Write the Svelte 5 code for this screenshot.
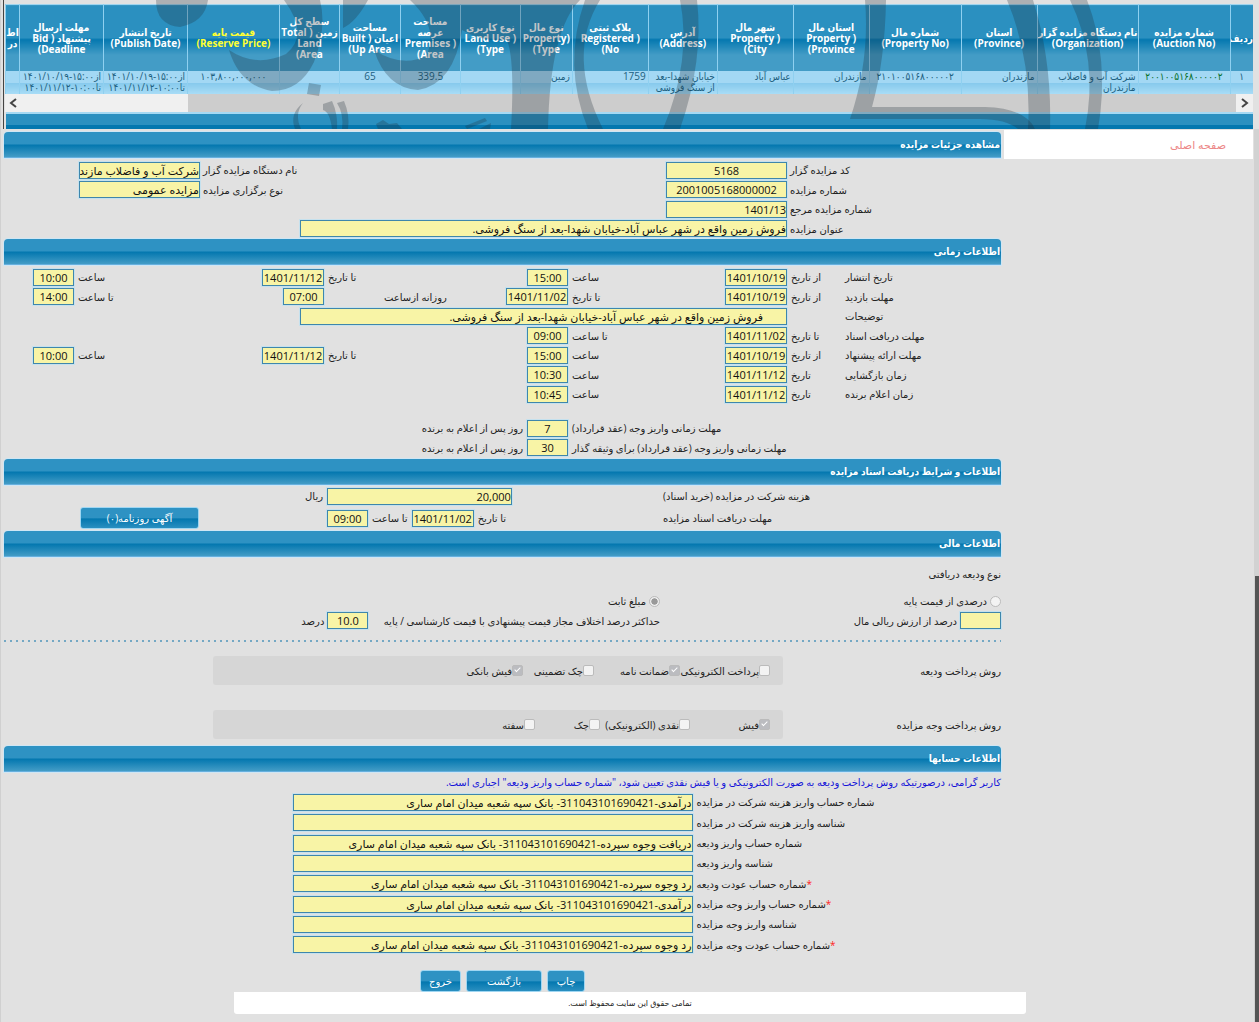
<script>
	const columns = [
		{ width: 23, head: ['ردیف'], cell: ['۱'], align: 'center' },
		{ width: 92, head: ['شماره مزایده', '(Auction No)'], cell: ['۲۰۰۱۰۰۵۱۶۸۰۰۰۰۰۲'], align: 'center', tone: 'green' },
		{ width: 101, head: ['نام دستگاه مزایده گزار', '(Organization)'], cell: ['شرکت آب و فاضلاب', 'مازندران'] },
		{ width: 76, head: ['استان', '(Province)'], cell: ['مازندران'] },
		{ width: 92, head: ['شماره مال', '(Property No)'], cell: ['۲۱۰۱۰۰۵۱۶۸۰۰۰۰۰۲'], align: 'center' },
		{ width: 76, head: ['استان مال', '( Property', 'Province)'], cell: ['مازندران'] },
		{ width: 76, head: ['شهر مال', '( Property', 'City)'], cell: ['عباس آباد'] },
		{ width: 69, head: ['آدرس', '(Address)'], cell: ['خیابان شهدا-بعد', 'از سنگ فروشی'] },
		{ width: 76, head: ['پلاک ثبتی', '( Registered', 'No)'], cell: ['1759'] },
		{ width: 52, head: ['نوع مال', '(Property', 'Type)'], cell: ['زمین'] },
		{ width: 60, head: ['نوع کاربری', '( Land Use', 'Type)'], cell: [] },
		{ width: 60, head: ['مساحت', 'عرصه', '( Premises', 'Area)'], cell: ['339.5'], align: 'center' },
		{ width: 61, head: ['مساحت', 'اعیان ( Built', 'Up Area)'], cell: ['65'], align: 'center' },
		{ width: 60, head: ['سطح کل', 'زمین ( Total', 'Land', 'Area)'], cell: [] },
		{ width: 92, head: ['قیمت پایه', '(Reserve Price)'], cell: ['۱۰۳,۸۰۰,۰۰۰,۰۰۰'], align: 'center', tone: 'yellow' },
		{ width: 84, head: ['تاریخ انتشار', '(Publish Date)'], cell: ['از۱۵:۰۰-۱۴۰۱/۱۰/۱۹', 'تا۱۰:۰۰-۱۴۰۱/۱۱/۱۲'] },
		{ width: 84, head: ['مهلت ارسال', 'پیشنهاد ( Bid', 'Deadline)'], cell: ['از۱۵:۰۰-۱۴۰۱/۱۰/۱۹', 'تا۱۰:۰۰-۱۴۰۱/۱۱/۱۲'] },
		{ width: 14, head: ['اط', 'در'], cell: [] }
	];
	const total = columns.reduce((sum, c) => sum + c.width, 0);

	const title = 'فروش زمین واقع در شهر عباس آباد-خیابان شهدا-بعد از سنگ فروشی.';

	// each part is [grid column of the label, label, value], the field takes the next column
	const times = [
		{ name: 'تاریخ انتشار', parts: [[2, 'از تاریخ', '1401/10/19'], [4, 'ساعت', '15:00'], [6, 'تا تاریخ', '1401/11/12'], [8, 'ساعت', '10:00']] },
		{ name: 'مهلت بازدید', parts: [[2, 'از تاریخ', '1401/10/19'], [4, 'تا تاریخ', '1401/11/02'], [6, 'روزانه ازساعت', '07:00'], [8, 'تا ساعت', '14:00']] },
		{ name: 'توضیحات', note: title, parts: [] },
		{ name: 'مهلت دریافت اسناد', parts: [[2, 'تا تاریخ', '1401/11/02'], [4, 'تا ساعت', '09:00']] },
		{ name: 'مهلت ارائه پیشنهاد', parts: [[2, 'از تاریخ', '1401/10/19'], [4, 'ساعت', '15:00'], [6, 'تا تاریخ', '1401/11/12'], [8, 'ساعت', '10:00']] },
		{ name: 'زمان بازگشایی', parts: [[2, 'تاریخ', '1401/11/12'], [4, 'ساعت', '10:30']] },
		{ name: 'زمان اعلام برنده', parts: [[2, 'تاریخ', '1401/11/12'], [4, 'ساعت', '10:45']] }
	];

	const deadlines = [
		{ name: 'مهلت زمانی واریز وجه (عقد قرارداد)', days: '7' },
		{ name: 'مهلت زمانی واریز وجه (عقد قرارداد) برای وثیقه گذار', days: '30' }
	];

	const methods = [
		{
			name: 'روش پرداخت ودیعه',
			kind: 'deposit',
			options: [['پرداخت الکترونیکی', false], ['ضمانت نامه', true], ['چک تضمینی', false], ['فیش بانکی', true]]
		},
		{
			name: 'روش پرداخت وجه مزایده',
			kind: 'payment',
			options: [['فیش', true], ['نقدی (الکترونیکی)', false], ['چک', false], ['سفته', false]]
		}
	];

	const accounts = [
		{ name: 'شماره حساب واریز هزینه شرکت در مزایده', value: 'درآمدی-311043101690421- بانک سپه شعبه میدان امام ساری' },
		{ name: 'شناسه واریز هزینه شرکت در مزایده', value: '' },
		{ name: 'شماره حساب واریز ودیعه', value: 'دریافت وجوه سپرده-311043101690421- بانک سپه شعبه میدان امام ساری' },
		{ name: 'شناسه واریز ودیعه', value: '' },
		{ name: 'شماره حساب عودت ودیعه', value: 'رد وجوه سپرده-311043101690421- بانک سپه شعبه میدان امام ساری', required: true },
		{ name: 'شماره حساب واریز وجه مزایده', value: 'درآمدی-311043101690421- بانک سپه شعبه میدان امام ساری', required: true },
		{ name: 'شناسه واریز وجه مزایده', value: '' },
		{ name: 'شماره حساب عودت وجه مزایده', value: 'رد وجوه سپرده-311043101690421- بانک سپه شعبه میدان امام ساری', required: true }
	];
</script>

<div class="page" dir="rtl">
	<div class="list">
		<table>
			<colgroup>
				{#each columns as c}
					<col style="width: {(c.width / total) * 100}%" />
				{/each}
			</colgroup>
			<thead>
				<tr>
					{#each columns as c}
						<th class={c.tone}>
							{#each c.head as line}<span>{line}</span>{/each}
						</th>
					{/each}
				</tr>
			</thead>
			<tbody>
				<tr>
					{#each columns as c}
						<td class={[c.align, c.tone]}>
							{#each c.cell as line}<span>{line}</span>{/each}
						</td>
					{/each}
				</tr>
			</tbody>
		</table>
		<div class="scroller">
			<button aria-label="راست">
				<svg viewBox="0 0 17 18"><path d="M6 5l5 4-5 4" /></svg>
			</button>
			<div class="thumb"></div>
			<div class="track"></div>
			<button aria-label="چپ">
				<svg viewBox="0 0 17 18"><path d="M11 5L6 9l5 4" /></svg>
			</button>
		</div>
		<div class="bar"></div>
		<svg class="mark" viewBox="0 0 1259 129" preserveAspectRatio="none" aria-hidden="true">
			<path d="M156 0Q156 25 180 27Q205 22 208 0Z" />
			<path d="M284 0L320 0Q327 28 314 62Q300 91 272 91Q240 86 229 50Q256 68 286 54Q310 35 284 0Z" />
			<path d="M343 0L368 0Q356 22 343 28Z" />
			<path d="M410 0L552 0L580 0Q550 30 548 129L511 129Q515 60 507 40Q482 42 462 30Q454 84 418 90Q386 88 374 50Q402 68 426 56Q440 28 410 0Z" />
			<path d="M585 0L600 0Q566 55 603 129L588 129Q562 65 585 0Z" />
			<path d="M680 0L697 0Q704 60 680 129L663 129Q692 60 680 0Z" />
			<path d="M865 0L886 0Q885 60 872 107L985 107Q1025 108 1035 129L1018 129Q1006 119 980 119L850 119Q870 60 865 0Z" />
			<path d="M1007 0L1033 0Q1052 60 1050 129L1028 129Q1032 60 1007 0Z" />
			<path d="M1070 0L1087 0Q1110 60 1098 129L1085 129Q1099 60 1070 0Z" />
			<path d="M309 83L321 85L319 96L307 94Z" />
			<path d="M303 103Q294 114 301 129L295 129Q289 114 303 103Z" />
			<path d="M323 104L332 101Q338 114 337 129L332 129Q330 112 323 110Z" />
			<path d="M337 103L344 101Q350 115 348 129L342 129Q344 114 337 103Z" />
			<path d="M376 124L383 120L389 124L397 123L402 129L378 129Z" />
			<path d="M465 126L485 118L487 121L467 129Z" />
			<path d="M479 129L491 123L490 129Z" />
		</svg>
	</div>

	<div class="content">
		<aside>
			<nav><a href="#home">صفحه اصلی</a></nav>
		</aside>

		<main>
			<h2>مشاهده جزئیات مزایده</h2>
			<div class="rows details">
				<label for="code">کد مزایده گزار</label>
				<input id="code" class="mid" value="5168" readonly />
				<label for="org">نام دستگاه مزایده گزار</label>
				<input id="org" value="شرکت آب و فاضلاب مازندران" readonly />
				<label class="first" for="number">شماره مزایده</label>
				<input id="number" class="mid" value="2001005168000002" readonly />
				<label for="type">نوع برگزاری مزایده</label>
				<input id="type" value="مزایده عمومی" readonly />
				<label class="first" for="ref">شماره مزایده مرجع</label>
				<input id="ref" value="1401/13" readonly />
				<label class="first" for="title">عنوان مزایده</label>
				<input id="title" class="span" value={title} readonly />
			</div>

			<h2>اطلاعات زمانی</h2>
			<div class="rows">
				{#each times as row, i}
					<div class="time">
						{#if row.note}
							<label class="name" for="note">{row.name}</label>
							<input id="note" class="note" value={row.note} readonly />
						{:else}
							<span class="name">{row.name}</span>
						{/if}
						{#each row.parts as [col, label, value]}
							<label
								class={{ daily: value === '07:00' }}
								style="grid-column: {col}"
								for="t{i}-{col}">{label}</label
							>
							<input
								id="t{i}-{col}"
								class={value.length > 5 ? 'date' : 'short'}
								style="grid-column: {col + 1}"
								{value}
								readonly
							/>
						{/each}
					</div>
				{/each}
			</div>
			<div class="rows deadlines">
				{#each deadlines as d, i}
					<div class="time">
						<label class="long" for="d{i}">{d.name}</label>
						<input id="d{i}" class="short" value={d.days} readonly />
						<span class="after">روز پس از اعلام به برنده</span>
					</div>
				{/each}
			</div>

			<h2>اطلاعات و شرایط دریافت اسناد مزایده</h2>
			<div class="docs">
				<label for="fee">هزینه شرکت در مزایده (خرید اسناد)</label>
				<div class="fields"><input id="fee" value="20,000" readonly /></div>
				<span class="unit">ریال</span>
				<span>مهلت دریافت اسناد مزایده</span>
				<div class="fields">
					<label for="until">تا تاریخ</label>
					<input id="until" class="date" value="1401/11/02" readonly />
					<label for="hour">تا ساعت</label>
					<input id="hour" class="short" value="09:00" readonly />
				</div>
				<button class="btn ad">آگهی روزنامه(۰)</button>
			</div>

			<h2>اطلاعات مالی</h2>
			<p class="deposit-type">نوع ودیعه دریافتی</p>
			<div class="money">
				<div class="choice">
					<input type="radio" id="percent" name="deposit" disabled />
					<label for="percent">درصدی از قیمت پایه</label>
				</div>
				<div class="choice">
					<input type="radio" id="fixed" name="deposit" checked disabled />
					<label for="fixed">مبلغ ثابت</label>
				</div>
				<div class="amount">
					<input id="share" class="short" value="" readonly />
					<label for="share">درصد از ارزش ریالی مال</label>
				</div>
				<div class="amount">
					<label class="limit" for="diff">حداکثر درصد اختلاف مجاز قیمت پیشنهادی با قیمت کارشناسی / پایه</label>
					<input id="diff" class="short" value="10.0" readonly />
					<span>درصد</span>
				</div>
			</div>
			<hr />
			{#each methods as m}
				<div class="method">
					<span>{m.name}</span>
					<div class="options {m.kind}">
						{#each m.options as [label, checked]}
							<label><input type="checkbox" {checked} disabled />{label}</label>
						{/each}
					</div>
				</div>
			{/each}

			<h2>اطلاعات حسابها</h2>
			<p class="hint">
				کاربر گرامی، درصورتیکه روش پرداخت ودیعه به صورت الکترونیکی و یا فیش نقدی تعیین شود، "شماره حساب واریز ودیعه" اجباری است.
			</p>
			<div class="accounts">
				{#each accounts as a, i}
					<label for="a{i}">{#if a.required}<b>*</b>{/if}{a.name}</label>
					<input id="a{i}" value={a.value} readonly />
				{/each}
			</div>

			<div class="actions">
				<button class="btn print">چاپ</button>
				<button class="btn back">بازگشت</button>
				<button class="btn exit">خروج</button>
			</div>
		</main>
	</div>

	<footer>تمامی حقوق این سایت محفوظ است.</footer>
	<div class="side-track"><div></div></div>
</div>

<style>
	:global(body) {
		background: #e1e1e1;
	}

	.page {
		position: relative;
		box-sizing: border-box;
		padding-bottom: 8px;
		border-left: 1px solid #d0d0d0;
		overflow: hidden;
		color: #222;
		font: 10px/12px 'Open Sans', 'DejaVu Sans', sans-serif;
	}

	input,
	button {
		box-sizing: border-box;
		margin: 0;
		padding: 0;
		font: inherit;
	}

	input:not([type]) {
		height: 17px;
		min-width: 0;
		border: 1px solid #3f86ab;
		background: #f8f4a6;
		color: #111;
		font-size: 11px;
		outline: 1px solid #c5e1ee;
	}

	.mid,
	.date,
	.short {
		text-align: center;
	}

	.date {
		width: 62px;
	}

	.short {
		width: 41px;
	}

	label,
	span {
		white-space: nowrap;
	}

	/* results list */
	.list {
		position: relative;
		padding: 4px 6px 0 1px;
		margin-left: 2px;
		border-left: 1px solid #444;
	}

	table {
		width: 100%;
		table-layout: fixed;
		border-collapse: collapse;
		font-family: 'Open Sans', 'DejaVu Sans Condensed', 'DejaVu Sans', sans-serif;
	}

	th,
	td {
		padding: 0 2px;
		overflow: hidden;
		border-left: 1px solid #8fd0f0;
	}

	th span,
	td span {
		display: block;
	}

	th {
		height: 66px;
		padding: 0;
		background: linear-gradient(#2b90c0 50%, #0377af 51%, #439cc6 75%, #439cc6);
		color: #fff;
		font-size: 10px;
		line-height: 11px;
		border-top: 1px solid #9fd4ee;
	}

	th.yellow {
		color: #ff3;
	}

	td {
		height: 23px;
		background: linear-gradient(#a3d8f4 50%, #86c9ec 52%, #a8dcf6);
		color: #1c5f80;
		text-align: right;
		vertical-align: top;
		line-height: 11px;
	}

	td.center {
		text-align: center;
	}

	td.green {
		color: #08702c;
	}

	.scroller {
		display: flex;
		height: 18px;
		background: #f0f0f0;
	}

	.scroller button {
		width: 17px;
		border: 0;
		background: #f0f0f0;
	}

	.scroller svg {
		display: block;
		width: 17px;
		height: 18px;
		fill: none;
		stroke: #444;
		stroke-width: 2;
	}

	.thumb {
		flex: 1048;
		background: #cdcdcd;
	}

	.track {
		flex: 166;
	}

	.bar {
		height: 15px;
		margin-left: 1px;
		border-top: 2px solid #a5d9f3;
		background: linear-gradient(#2b90c0 70%, #0377af 75%);
	}

	.mark {
		position: absolute;
		top: 0;
		left: -4px;
		width: calc(100% + 4px);
		height: 129px;
		fill: #1f2c36;
		fill-opacity: 0.27;
		pointer-events: none;
	}

	/* body */
	.content {
		display: flex;
		gap: 3px;
		padding: 3px 6px 0 3px;
	}

	aside {
		flex: 249;
	}

	nav {
		margin-top: -2px;
		padding: 9px 27px 8px 0;
		background: #fff;
		font-size: 11px;
	}

	a {
		color: #ec8686;
		text-decoration: none;
	}

	main {
		flex: 997;
		min-width: 0;
	}

	h2 {
		box-sizing: border-box;
		height: 26px;
		margin: 0;
		padding: 0 1px;
		border-bottom: 1px solid #66b0df;
		border-radius: 4px 4px 0 0;
		background: linear-gradient(#2e92c3 48%, #0377af 52%, #439cc6);
		box-shadow: 0 0 0 1px #cfe6f4;
		color: #fff;
		font-family: 'Open Sans', 'DejaVu Sans Condensed', 'DejaVu Sans', sans-serif;
		font-size: 10px;
		line-height: 25px;
	}

	.rows {
		display: grid;
		grid-auto-rows: 20px 19px;
		align-items: center;
		padding: 2px 0 1px;
	}

	.details {
		grid-template-columns: 214fr 121fr 466fr 121fr 75fr;
	}

	.details label {
		padding-left: 3px;
		text-align: left;
	}

	.first {
		grid-column: 1;
	}

	.span {
		grid-column: 2 / 4;
		width: 83%;
	}

	.time {
		display: grid;
		grid-template-columns: 156fr 58fr 62fr 157fr 62fr 182fr 62fr 188fr 70fr;
		align-items: center;
	}

	.time > * {
		grid-row: 1;
	}

	.time label {
		padding-left: 4px;
		text-align: left;
	}

	.time .name {
		padding-left: 0;
		text-align: left;
	}

	.time .daily {
		padding-left: 60px;
	}

	.note {
		grid-column: 3 / 7;
		padding: 0 23px;
	}

	.time .note {
		width: auto;
		margin-left: -24px;
	}

	.time .long {
		grid-column: 1 / 5;
	}

	.deadlines {
		padding: 13px 0 2px;
	}

	.deadlines .short {
		grid-column: 5;
	}

	.after {
		grid-column: 6;
		margin-right: -17px;
	}

	.docs {
		display: grid;
		grid-template-columns: 338fr 336fr 323fr;
		grid-auto-rows: 22px;
		align-items: center;
		padding-bottom: 2px;
	}

	.docs > label,
	.docs > span {
		text-align: left;
	}

	.docs .unit {
		padding-right: 4px;
		text-align: right;
	}

	.fields {
		display: flex;
		align-items: center;
		justify-content: flex-end;
		gap: 4px;
	}

	#fee {
		width: 55%;
	}

	.btn {
		height: 22px;
		border: 1px solid #9fd6f2;
		border-radius: 3px;
		background: linear-gradient(#2e92c3 50%, #0377af 54%, #2a8fc0);
		color: #fff;
	}

	.ad {
		width: 119px;
		margin-left: 76px;
		justify-self: end;
	}

	p {
		margin: 0;
	}

	.deposit-type {
		line-height: 34px;
	}

	.money {
		display: grid;
		grid-template-columns: 341fr 656fr;
		grid-template-rows: 20px 19px;
		align-items: center;
	}

	.choice,
	.amount {
		display: flex;
		align-items: center;
		gap: 3px;
	}

	.limit {
		flex: 0 0 44%;
	}

	.choice input,
	.options input {
		appearance: none;
		flex: none;
		width: 11px;
		height: 11px;
		border: 1px solid #bbb;
		background: #f3f3f3;
	}

	.choice input {
		border-radius: 50%;
	}

	.choice input:checked {
		background: radial-gradient(#999 45%, #eee 55%);
	}

	.options input {
		border-radius: 2px;
	}

	.options input:checked {
		position: relative;
		background: #bbbcc0;
	}

	.options input:checked::after {
		content: '';
		position: absolute;
		left: 3px;
		top: 0;
		width: 2px;
		height: 5px;
		border: solid #fff;
		border-width: 0 1px 1px 0;
		transform: rotate(45deg);
	}

	hr {
		height: 2px;
		margin: 10px 0 14px;
		border: 0;
		background: repeating-linear-gradient(90deg, #74a8c4 0 2px, transparent 2px 6px);
	}

	.method {
		display: grid;
		grid-template-columns: 218fr 570fr 209fr;
		align-items: center;
		margin-bottom: 25px;
	}

	.method + h2 {
		margin-top: -18px;
	}

	.options {
		display: grid;
		height: 29px;
		box-sizing: border-box;
		padding-right: 13px;
		border-radius: 3px;
		background: #d6d6d6;
		align-items: center;
	}

	.options label {
		display: flex;
		align-items: center;
	}

	.deposit {
		grid-template-columns: 90fr 86fr 71fr 310fr;
	}

	.payment {
		grid-template-columns: 80fr 90fr 65fr 322fr;
	}

	.hint {
		color: #1414d8;
		line-height: 20px;
	}

	.accounts {
		display: grid;
		grid-template-columns: 309fr 400fr;
		grid-auto-rows: 20px 21px 20px;
		align-items: center;
		width: 71%;
	}

	.accounts label {
		padding-left: 4px;
		text-align: left;
	}

	b {
		color: #f22;
		font-weight: normal;
	}

	.actions {
		display: flex;
		justify-content: center;
		gap: 5px;
		padding-top: 15px;
	}

	.print {
		width: 38px;
	}

	.back {
		width: 76px;
	}

	.exit {
		width: 41px;
	}

	footer {
		width: 63%;
		margin: 0 auto;
		background: #fff;
		border-radius: 0 0 3px 3px;
		text-align: center;
		font-size: 8px;
		line-height: 22px;
	}

	.side-track {
		position: absolute;
		top: 129px;
		right: 0;
		bottom: 0;
		width: 5px;
		background: #d2d2d2;
	}

	.side-track div {
		height: 50%;
		margin-top: 447px;
		margin-left: 1px;
		background: #555;
	}
</style>
